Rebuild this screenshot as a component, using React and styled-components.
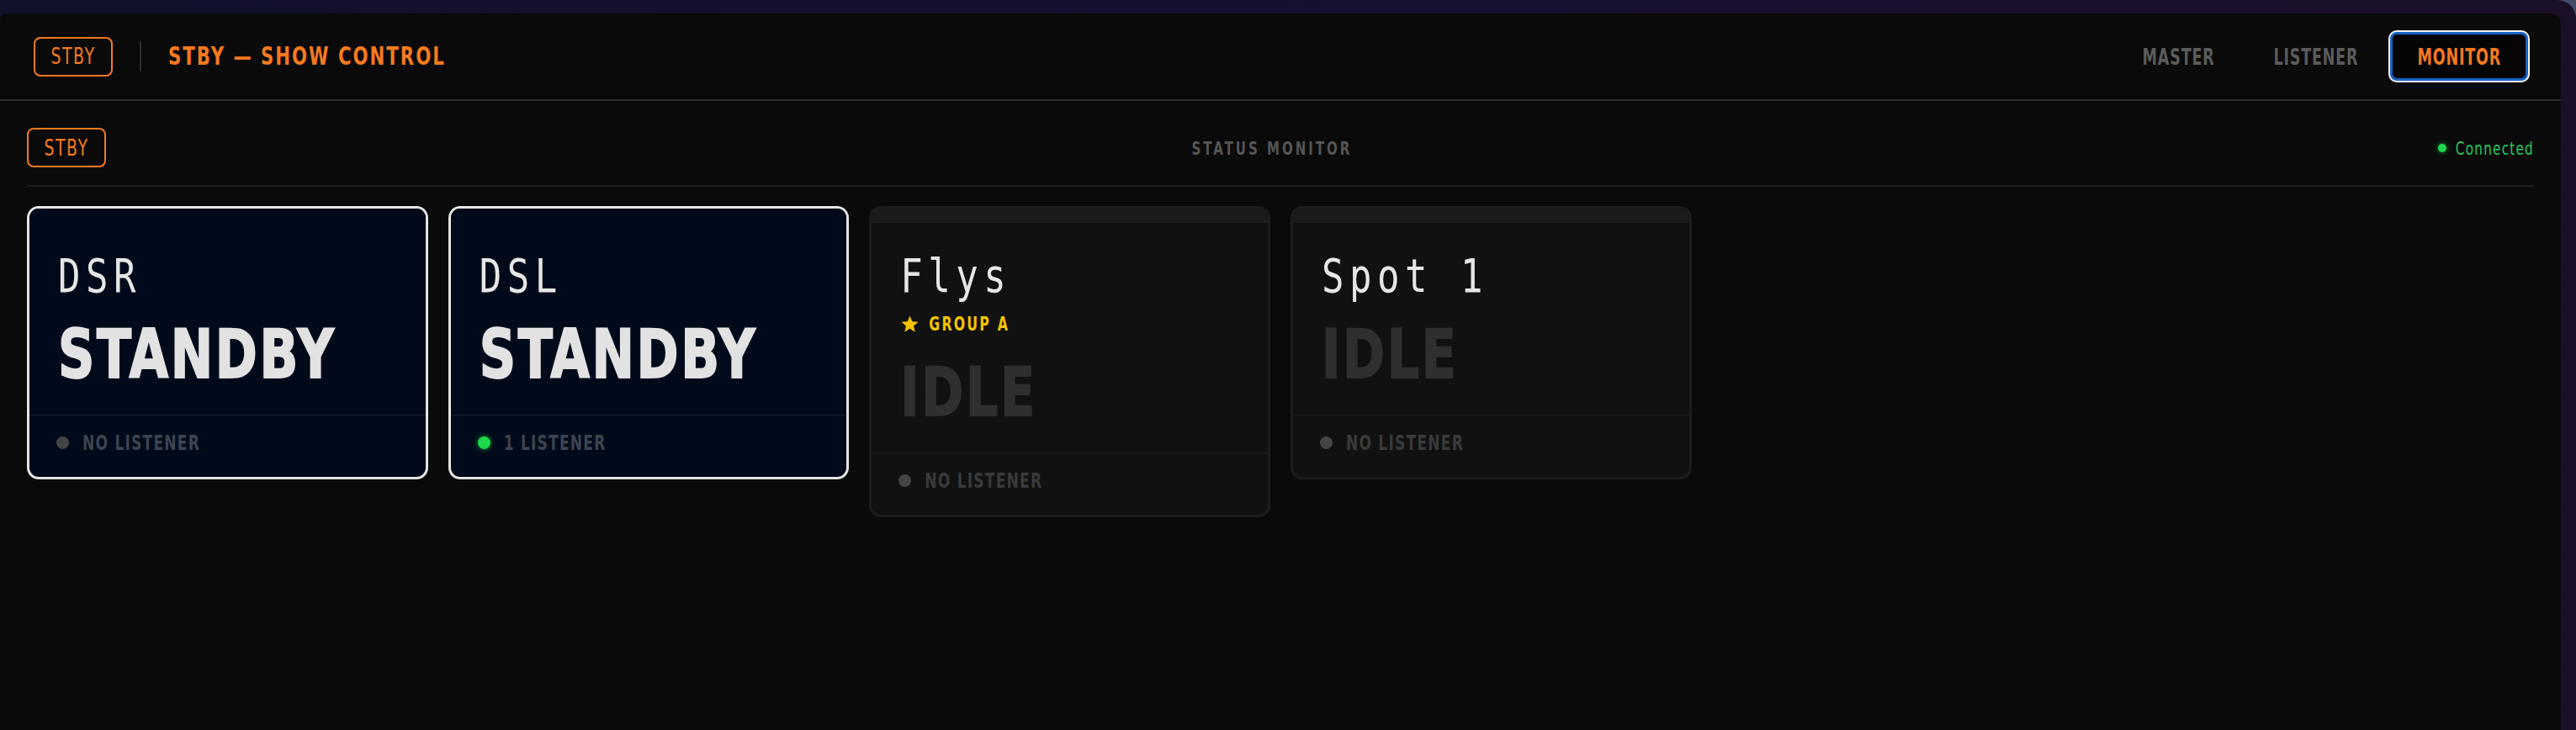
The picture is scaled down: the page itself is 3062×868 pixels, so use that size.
import React from "react";
import styled, { createGlobalStyle } from "styled-components";

const NARROW = `"DejaVu Sans Condensed", "DejaVu Sans", sans-serif`;
const MONO = `"DejaVu Sans Mono", "Liberation Mono", monospace`;
const ORANGE = "#f5791f";

const GlobalStyle = createGlobalStyle`
  html, body {
    margin: 0;
    padding: 0;
  }
  body {
    background: #434b6b;
    font-family: ${NARROW};
    -webkit-font-smoothing: antialiased;
  }
  * { box-sizing: border-box; }
`;

/* Condensed display type: a smaller face stretched vertically, so that the
   layout width stays the real width of the narrow lettering. */
const Tall = styled.span`
  display: inline-block;
  transform: scaleY(${(p) => p.$s || 1.3});
`;

const Shell = styled.div`
  min-height: 868px;
  padding: 16px 18px 0 0;
  background: linear-gradient(90deg, #11112a 0%, #171030 55%, #1c1029 100%);
  border-top-right-radius: 22px;
  display: flex;
  flex-direction: column;
`;

const Panel = styled.main`
  flex: 1;
  background: #0a0a0a;
  border-radius: 8px 10px 0 0;
  display: flex;
  flex-direction: column;
`;

const Header = styled.header`
  height: 104px;
  display: flex;
  align-items: center;
  padding: 0 39px 0 40px;
  border-bottom: 2px solid #2c2c2c;
`;

const Brand = styled.div`
  display: flex;
  align-items: center;
  gap: 32px;
`;

const Badge = styled.span`
  display: inline-flex;
  align-items: center;
  justify-content: center;
  width: 94px;
  height: 47px;
  border: 2px solid ${ORANGE};
  border-radius: 8px;
  color: ${ORANGE};
  font-family: ${NARROW};
  font-size: 21px;
  font-weight: 400;
  letter-spacing: 1.5px;
`;

const VDivider = styled.span`
  width: 2px;
  height: 36px;
  background: #2e2e2e;
`;

const Title = styled.h1`
  margin: 0;
  color: ${ORANGE};
  font-family: ${NARROW};
  font-size: 23.6px;
  font-weight: 700;
  letter-spacing: 2px;
  transform: scaleY(1.28);
`;

const Nav = styled.nav`
  margin-left: auto;
  display: flex;
  align-items: center;
  gap: 6px;
`;

const NavButton = styled.button`
  height: 58px;
  padding: 0 29px;
  border: 3px solid ${(p) => (p.$active ? "#1763c6" : "transparent")};
  border-radius: 8px;
  background: ${(p) => (p.$active ? "#050505" : "transparent")};
  box-shadow: ${(p) => (p.$active ? "0 0 0 2px #f2f2f2" : "none")};
  color: ${(p) => (p.$active ? ORANGE : "#5b5b5b")};
  font-family: ${NARROW};
  font-size: 19.5px;
  font-weight: 700;
  letter-spacing: 0.8px;
  cursor: pointer;
`;

const SubBar = styled.div`
  margin: 0 32px;
  padding: 32px 0 21px;
  display: flex;
  align-items: center;
  justify-content: space-between;
  border-bottom: 2px solid #1f1f1f;
`;

const SectionLabel = styled.span`
  color: #555555;
  font-family: ${NARROW};
  font-size: 16.7px;
  font-weight: 700;
  letter-spacing: 3px;
  transform: scaleY(1.31);
`;

const Conn = styled.span`
  display: inline-flex;
  align-items: center;
  gap: 11px;
  color: #27c95a;
  font-family: ${NARROW};
  font-size: 17px;
  letter-spacing: 1.2px;
`;

const Dot = styled.span`
  flex: none;
  width: ${(p) => p.$size || 15}px;
  height: ${(p) => p.$size || 15}px;
  border-radius: 50%;
  background: ${(p) => (p.$on ? "#1fd94a" : "#444444")};
  box-shadow: ${(p) => (p.$on ? "0 0 6px rgba(31, 217, 74, 0.7)" : "none")};
`;

const Grid = styled.section`
  margin: 23px 32px 0;
  display: grid;
  grid-template-columns: repeat(6, 1fr);
  gap: 24px;
  align-items: start;
`;

const Card = styled.article`
  border: 3px solid ${(p) => (p.$active ? "#e4e4e4" : "#1c1c1c")};
  border-radius: 14px;
  background: ${(p) => (p.$active ? "#010a1a" : "#111111")};
  overflow: hidden;
`;

const Strip = styled.div`
  height: 17px;
  background: ${(p) => (p.$active ? "#010a1a" : "#1b1b1b")};
`;

const CardBody = styled.div`
  padding: 36px 34px 30px;
  display: flex;
  flex-direction: column;
  align-items: flex-start;
`;

const Name = styled.div`
  color: #e6e6e6;
  font-family: ${MONO};
  font-size: 44px;
  line-height: 54px;
  font-weight: 400;
  letter-spacing: 6.5px;
  transform: scaleY(1.25);
`;

const Group = styled.div`
  display: flex;
  align-items: center;
  gap: 11px;
  margin: 18px 0 3px;
  height: 24px;
  color: #f5c400;
  font-family: ${NARROW};
  font-size: 17.5px;
  line-height: 24px;
  font-weight: 700;
  letter-spacing: 2.2px;
`;

const Status = styled.div`
  margin-top: 27px;
  color: ${(p) => (p.$active ? "#e2e2e2" : "#2f2f2f")};
  font-family: ${NARROW};
  font-size: 67px;
  line-height: 81px;
  font-weight: 700;
  letter-spacing: 2.6px;
  -webkit-text-stroke: 1.5px currentColor;
  transform: scaleY(1.19);
`;

const Footer = styled.div`
  display: flex;
  align-items: center;
  gap: 16px;
  padding: 20px 32px 28px;
  border-top: 1px solid ${(p) => (p.$active ? "#1b2130" : "#1d1d1d")};
`;

const ListenerText = styled.span`
  color: ${(p) => (p.$active ? "#3d4350" : "#3a3a3a")};
  font-family: ${NARROW};
  font-size: 19px;
  line-height: 25px;
  font-weight: 700;
  letter-spacing: 1.2px;
  transform: scaleY(1.3);
`;

const Star = () => (
  <svg width="23" height="23" viewBox="0 0 24 24" aria-hidden="true">
    <polygon
      fill="#f5c400"
      points="12,1.5 14.9,8.6 22.5,9.2 16.7,14.1 18.5,21.6 12,17.6 5.5,21.6 7.3,14.1 1.5,9.2 9.1,8.6"
    />
  </svg>
);

const stations = [
  { name: "DSR", status: "STANDBY", active: true, listeners: 0 },
  { name: "DSL", status: "STANDBY", active: true, listeners: 1 },
  { name: "Flys", status: "IDLE", active: false, listeners: 0, group: "GROUP A" },
  { name: "Spot 1", status: "IDLE", active: false, listeners: 0 },
];

function StationCard({ s }) {
  const label =
    s.listeners === 0 ? "NO LISTENER" : `${s.listeners} LISTENER${s.listeners > 1 ? "S" : ""}`;
  return (
    <Card $active={s.active}>
      <Strip $active={s.active} />
      <CardBody>
        <Name>{s.name}</Name>
        {s.group && (
          <Group>
            <Star />
            <Tall $s={1.33}>{s.group}</Tall>
          </Group>
        )}
        <Status $active={s.active}>{s.status}</Status>
      </CardBody>
      <Footer $active={s.active}>
        <Dot $on={s.listeners > 0} />
        <ListenerText $active={s.active}>{label}</ListenerText>
      </Footer>
    </Card>
  );
}

export default function App() {
  return (
    <>
      <GlobalStyle />
      <Shell>
        <Panel>
          <Header>
            <Brand>
              <Badge>
                <Tall $s={1.235}>STBY</Tall>
              </Badge>
              <VDivider />
              <Title>STBY — SHOW CONTROL</Title>
            </Brand>
            <Nav>
              <NavButton>
                <Tall $s={1.4}>MASTER</Tall>
              </NavButton>
              <NavButton>
                <Tall $s={1.4}>LISTENER</Tall>
              </NavButton>
              <NavButton $active>
                <Tall $s={1.4}>MONITOR</Tall>
              </NavButton>
            </Nav>
          </Header>
          <SubBar>
            <Badge>
              <Tall $s={1.235}>STBY</Tall>
            </Badge>
            <SectionLabel>STATUS MONITOR</SectionLabel>
            <Conn>
              <Dot $on $size={10} />
              <Tall $s={1.28}>Connected</Tall>
            </Conn>
          </SubBar>
          <Grid>
            {stations.map((s) => (
              <StationCard key={s.name} s={s} />
            ))}
          </Grid>
        </Panel>
      </Shell>
    </>
  );
}
